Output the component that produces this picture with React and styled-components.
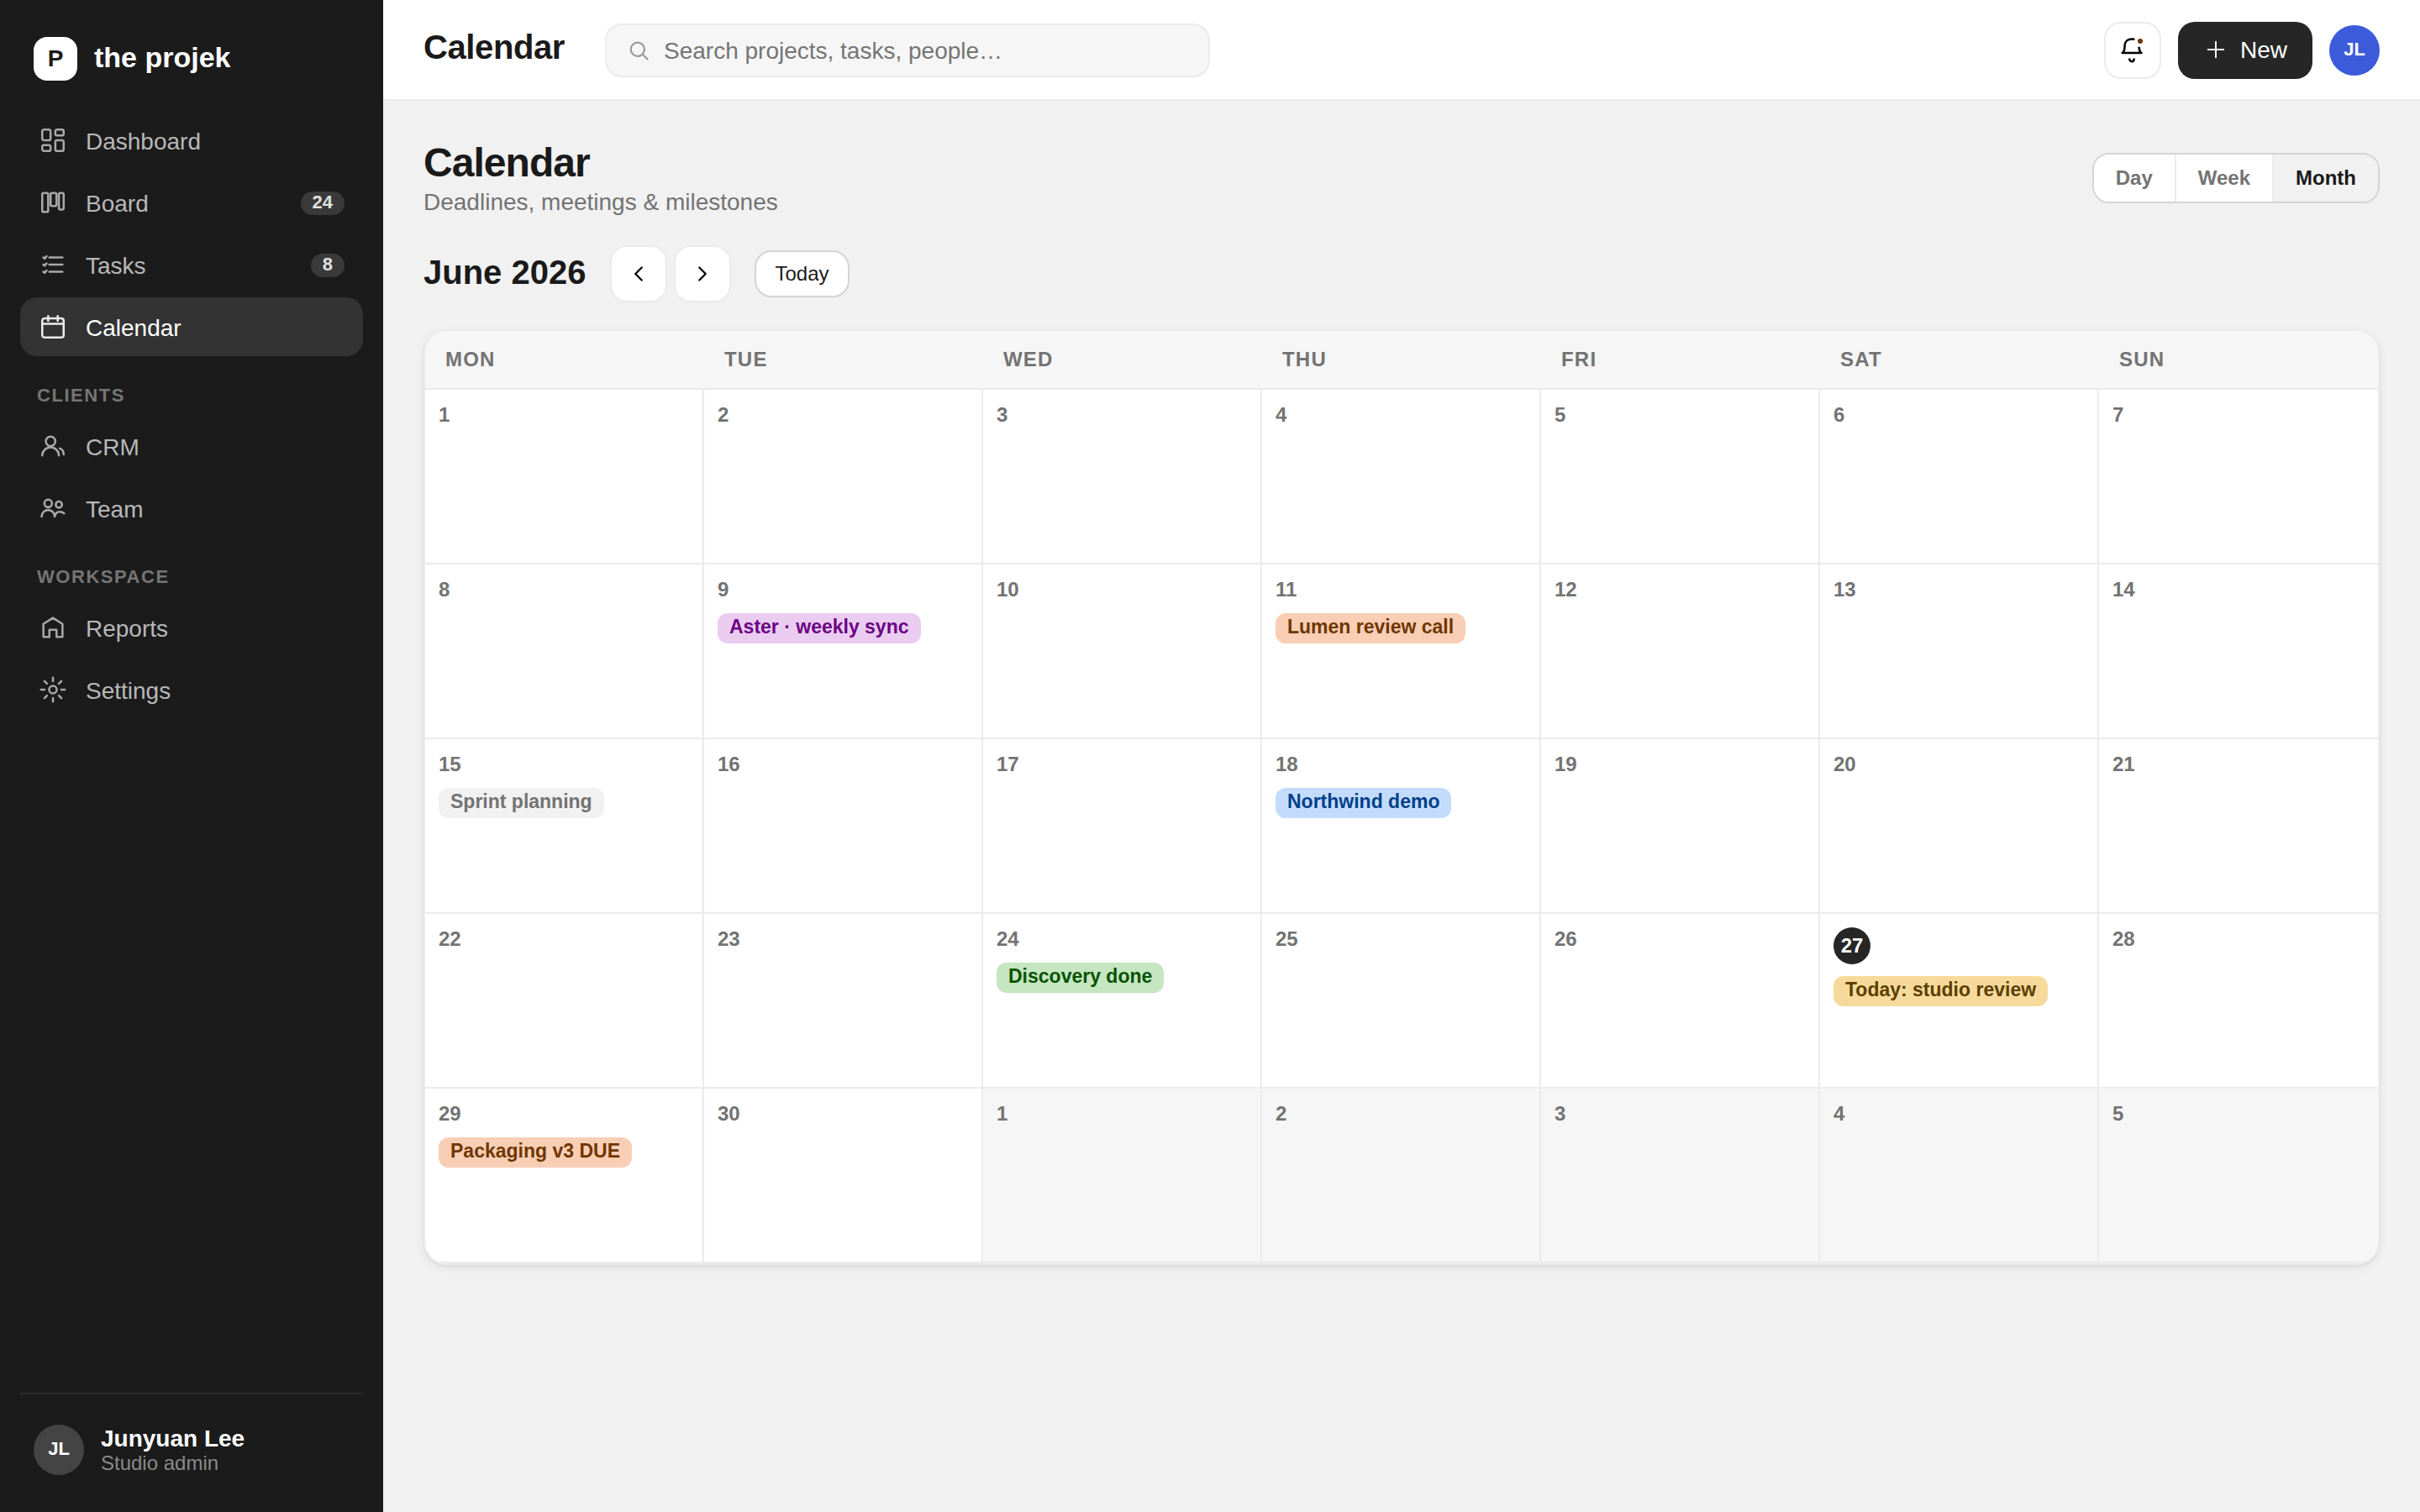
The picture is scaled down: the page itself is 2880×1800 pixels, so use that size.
import React from 'react';
import styled, { createGlobalStyle } from 'styled-components';

const GlobalStyle = createGlobalStyle`
  * {
    box-sizing: border-box;
  }

  html, body, #root {
    height: 100%;
    margin: 0;
  }

  body {
    font-family: "Liberation Sans", Arial, sans-serif;
    font-size: 28px;
    color: #1a1a1a;
    background: #f1f1f1;
  }

  button, input {
    font-family: inherit;
  }
`

const Layout = styled.div`
display: flex;
height: 100vh;
`

/* ---------- sidebar ---------- */

const Sidebar = styled.aside`
width: 456px;
flex-shrink: 0;
padding: 44px 24px;
display: flex;
flex-direction: column;
background: #1b1b1b;
`

const Brand = styled.div`
display: flex;
align-items: center;
gap: 20px;
padding: 0 16px;
margin-bottom: 36px;
`

const BrandMark = styled.div`
width: 52px;
height: 52px;
border-radius: 16px;
display: flex;
align-items: center;
justify-content: center;
background: #fff;
color: #1b1b1b;
font-size: 28px;
font-weight: 700;
`

const BrandName = styled.span`
padding-bottom: 3px;
font-size: 34px;
font-weight: 700;
color: #fff;
`

const Nav = styled.nav`
display: flex;
flex-direction: column;
gap: 4px;
`

const NavItem = styled.a`
height: 70px;
padding: 0 22px;
border-radius: 20px;
display: flex;
align-items: center;
gap: 22px;
color: ${props => props.$active ? '#fff' : '#b8b8b8'};
background: ${props => props.$active ? '#333' : 'transparent'};

svg {
  opacity: 0.9;
}
`

const NavText = styled.span`
flex: 1;
padding-top: 3px;
line-height: 32px;
`

const NavCount = styled.span`
height: 28px;
margin-top: 2px;
padding: 0 14px;
border-radius: 14px;
background: #3a3a3a;
color: #e0e0e0;
font-size: 22px;
font-weight: 700;
line-height: 26px;
`

const NavLabel = styled.div`
height: 64px;
padding: 30px 20px 0;
font-size: 22px;
font-weight: 700;
line-height: 26px;
letter-spacing: 0.07em;
text-transform: uppercase;
color: #757575;
`

const UserBox = styled.div`
margin-top: auto;
padding: 36px 16px 0;
border-top: 2px solid #2e2e2e;
display: flex;
align-items: center;
gap: 20px;
`

const Avatar = styled.div`
width: 60px;
height: 60px;
padding-bottom: 3px;
border-radius: 50%;
display: flex;
align-items: center;
justify-content: center;
background: ${props => props.$color};
color: #fff;
font-size: 22px;
font-weight: 700;
`

const UserName = styled.div`
padding-top: 2px;
font-weight: 700;
line-height: 30px;
color: #fff;
`

const UserRole = styled.div`
font-size: 24px;
line-height: 28px;
color: #8a8a8a;
`

/* ---------- top bar ---------- */

const Main = styled.main`
flex: 1;
min-width: 0;
`

const Topbar = styled.header`
height: 120px;
padding: 0 48px;
display: flex;
align-items: center;
background: #fff;
box-shadow: inset 0 -2px #ebebeb;
`

const TopTitle = styled.div`
margin-right: 48px;
padding-bottom: 7px;
font-size: 40px;
font-weight: 700;
letter-spacing: -0.01em;
`

const SearchBox = styled.div`
width: 720px;
height: 64px;
padding: 0 24px;
border: 2px solid #ebebeb;
border-radius: 20px;
display: flex;
align-items: center;
gap: 16px;
background: #f6f6f6;
color: #999;

svg {
  margin-bottom: 1px;
}
`

const SearchInput = styled.input`
flex: 1;
padding: 2px 0 0;
border: 0;
outline: 0;
background: transparent;
font-size: 28px;

&::placeholder {
  color: #757575;
}
`

const TopActions = styled.div`
margin-left: auto;
display: flex;
align-items: center;
gap: 20px;
`

const IconButton = styled.button`
position: relative;
width: 68px;
height: 68px;
padding: 0;
border: 2px solid #ebebeb;
border-radius: 20px;
display: flex;
align-items: center;
justify-content: center;
background: #fff;
color: #000;
`

const AlertDot = styled.span`
position: absolute;
top: 14px;
right: 16px;
width: 14px;
height: 14px;
border: 4px solid #fff;
border-radius: 50%;
background: #6f3600;
`

const NewButton = styled.button`
height: 68px;
padding: 0 30px 0 32px;
border: 0;
border-radius: 20px;
display: flex;
align-items: center;
gap: 16px;
background: #262626;
color: #fff;
font-size: 28px;

svg {
  margin-bottom: 2px;
}
`

/* ---------- calendar page ---------- */

const Page = styled.section`
padding: 48px;
`

const PageHead = styled.div`
display: flex;
align-items: center;
justify-content: space-between;
`

const PageTitle = styled.h1`
margin: 0 0 4px;
font-size: 48px;
line-height: 52px;
letter-spacing: -0.02em;
`

const PageSub = styled.p`
margin: 0;
padding-top: 1px;
line-height: 31px;
color: #737373;
`

const Segments = styled.div`
height: 60px;
border: 2px solid #d4d4d4;
border-radius: 20px;
display: flex;
overflow: hidden;
`

const Segment = styled.button`
padding: 0 26px;
border: 0;
border-right: 2px solid #ebebeb;
background: ${props => props.$active ? '#f1f1f1' : '#fff'};
color: ${props => props.$active ? '#1a1a1a' : '#737373'};
font-size: 24px;
font-weight: 700;

&:last-child {
  border-right: 0;
}
`

const MonthBar = styled.div`
margin: 36px 0 32px;
display: flex;
align-items: center;
gap: 28px;
`

const MonthName = styled.h2`
margin: 0;
padding: 0 1px 4px 0;
font-size: 40px;
`

const MonthNav = styled.div`
display: flex;
gap: 8px;
`

const TodayButton = styled.button`
height: 56px;
padding: 0 22px;
border: 2px solid #d4d4d4;
border-radius: 20px;
background: #fff;
color: #1a1a1a;
font-size: 24px;
`

const Card = styled.div`
border: 2px solid #ebebeb;
border-radius: 28px;
overflow: hidden;
background: #fff;
box-shadow: 0 2px 4px rgba(0, 0, 0, 0.06), 0 4px 12px rgba(0, 0, 0, 0.06);
`

const WeekHead = styled.div`
height: 70px;
display: grid;
grid-template-columns: repeat(7, 1fr);
align-items: center;
background: #f6f6f6;
border-bottom: 2px solid #ebebeb;
`

const WeekDay = styled.span`
padding-left: 24px;
font-size: 24px;
font-weight: 700;
letter-spacing: 0.05em;
text-transform: uppercase;
color: #737373;
`

const Days = styled.div`
display: grid;
grid-template-columns: repeat(7, 1fr);
grid-auto-rows: 208px;
`

const Day = styled.div`
padding: 16px;
display: flex;
flex-direction: column;
align-items: flex-start;
gap: 14px;
border-right: 2px solid #ebebeb;
border-bottom: 2px solid #ebebeb;
background: ${props => props.$outside ? '#f6f6f6' : '#fff'};

&:nth-child(7n) {
  border-right: 0;
}
`

const DayNumber = styled.span`
font-size: 24px;
font-weight: 700;
line-height: 28px;
color: #737373;
`

const TodayNumber = styled(DayNumber)`
width: 44px;
height: 44px;
border-radius: 50%;
line-height: 44px;
text-align: center;
background: #262626;
color: #fff;
`

const tones = {
  purple: ['#eaccf1', '#6b0085'],
  orange: ['#f8ceb4', '#6f3600'],
  gray: ['#f1f1f1', '#737373'],
  blue: ['#c4dcfb', '#00408a'],
  green: ['#c5e6c0', '#085200'],
  amber: ['#f7da9b', '#5a3f00'],
}

const EventPill = styled.span`
height: 36px;
padding: 3px 14px 0;
border-radius: 12px;
background: ${props => tones[props.$tone][0]};
color: ${props => tones[props.$tone][1]};
font-size: 23px;
font-weight: 700;
line-height: 26px;
white-space: nowrap;
`

/* ---------- icons ---------- */

const Icon = ({ size = 34, stroke = 1.8, children }) => (
    <svg width={size} height={size} viewBox="0 0 24 24" fill="none" stroke="currentColor"
        strokeWidth={stroke} strokeLinecap="round" strokeLinejoin="round">
        {children}
    </svg>
)

const icons = {
  dashboard: (
    <Icon>
      <rect x="3" y="3" width="7" height="9" rx="1.5" />
      <rect x="14" y="3" width="7" height="5" rx="1.5" />
      <rect x="14" y="12" width="7" height="9" rx="1.5" />
      <rect x="3" y="16" width="7" height="5" rx="1.5" />
    </Icon>
  ),
  board: (
    <Icon>
      <rect x="3" y="4" width="5" height="16" rx="1.2" />
      <rect x="10" y="4" width="5" height="11" rx="1.2" />
      <rect x="17" y="4" width="4" height="14" rx="1.2" />
    </Icon>
  ),
  tasks: (
    <Icon>
      <path d="M9 6h11M9 12h11M9 18h11" />
      <path d="M4 6l1 1 1.6-2M4 12l1 1 1.6-2M4 18l1 1 1.6-2" />
    </Icon>
  ),
  calendar: (
    <Icon>
      <rect x="3" y="5" width="18" height="16" rx="2" />
      <path d="M3 9.5h18M8 3v4M16 3v4" />
    </Icon>
  ),
  crm: (
    <Icon>
      <circle cx="10" cy="8" r="4" />
      <path d="M3 20a7 7 0 0 1 14 0M17.8 14c2 .7 3.2 2.4 3.2 5" />
    </Icon>
  ),
  team: (
    <Icon>
      <circle cx="8" cy="8" r="3.2" />
      <circle cx="17" cy="9" r="2.6" />
      <path d="M2.5 19a5.5 5.5 0 0 1 11 0M13.5 19c.4-2.5 1.9-4 4.1-4 1.6 0 2.9.5 3.8 1.4" />
    </Icon>
  ),
  reports: (
    <Icon>
      <path d="M4 9l8-5 8 5v11h-5v-6H9v6H4z" />
    </Icon>
  ),
  settings: (
    <Icon>
      <circle cx="12" cy="12" r="3.2" />
      <path d="M12 2v3M12 19v3M2 12h3M19 12h3M4.9 4.9L7 7M17 17l2.1 2.1M4.9 19.1L7 17M17 7l2.1-2.1" />
    </Icon>
  ),
}

/* ---------- data ---------- */

const menu = [
  {
    items: [
      { icon: 'dashboard', text: 'Dashboard' },
      { icon: 'board', text: 'Board', count: 24 },
      { icon: 'tasks', text: 'Tasks', count: 8 },
      { icon: 'calendar', text: 'Calendar', active: true },
    ],
  },
  {
    label: 'Clients',
    items: [
      { icon: 'crm', text: 'CRM' },
      { icon: 'team', text: 'Team' },
    ],
  },
  {
    label: 'Workspace',
    items: [
      { icon: 'reports', text: 'Reports' },
      { icon: 'settings', text: 'Settings' },
    ],
  },
]

const weekDays = ['Mon', 'Tue', 'Wed', 'Thu', 'Fri', 'Sat', 'Sun']

const events = {
  9: { title: 'Aster · weekly sync', tone: 'purple' },
  11: { title: 'Lumen review call', tone: 'orange' },
  15: { title: 'Sprint planning', tone: 'gray' },
  18: { title: 'Northwind demo', tone: 'blue' },
  24: { title: 'Discovery done', tone: 'green' },
  27: { title: 'Today: studio review', tone: 'amber' },
  29: { title: 'Packaging v3 DUE', tone: 'orange' },
}

const TODAY = 27
const DAYS_IN_MONTH = 30

// five full weeks, the tail runs into July
const cells = Array.from({ length: 35 }, (_, i) => {
  const outside = i >= DAYS_IN_MONTH
  return {
    key: i,
    number: outside ? i - DAYS_IN_MONTH + 1 : i + 1,
    outside,
    event: outside ? null : events[i + 1],
    today: i + 1 === TODAY,
  }
})

const SideMenu = () => (
  <Sidebar>
    <Brand>
      <BrandMark>P</BrandMark>
      <BrandName>the projek</BrandName>
    </Brand>
    <Nav>
      {menu.map((group, i) => (
        <React.Fragment key={i}>
          {group.label && <NavLabel>{group.label}</NavLabel>}
          {group.items.map(item => (
            <NavItem key={item.text} $active={item.active}>
              {icons[item.icon]}
              <NavText>{item.text}</NavText>
              {item.count && <NavCount>{item.count}</NavCount>}
            </NavItem>
          ))}
        </React.Fragment>
      ))}
    </Nav>
    <UserBox>
      <Avatar $color="#444">JL</Avatar>
      <div>
        <UserName>Junyuan Lee</UserName>
        <UserRole>Studio admin</UserRole>
      </div>
    </UserBox>
  </Sidebar>
)

const Header = () => (
  <Topbar>
    <TopTitle>Calendar</TopTitle>
    <SearchBox>
      <Icon size={28}>
        <circle cx="11" cy="11" r="7" />
        <path d="M21 21l-4.5-4.5" />
      </Icon>
      <SearchInput placeholder="Search projects, tasks, people…" />
    </SearchBox>
    <TopActions>
      <IconButton>
        <svg width="34" height="34" viewBox="0 0 34 34" fill="none" stroke="currentColor"
          strokeWidth="2.5" strokeLinecap="round" strokeLinejoin="round">
          <path d="M4.6 20.1h22.9M5.4 19.6c1.6-1.8 2.2-4.1 2.2-7.9 0-5.3 3.4-8.2 8.5-8.2s8.5 2.9 8.5 8.2c0 3.8.6 6.1 2 7.9" />
          <path d="M13.3 27.5a2.65 2.65 0 0 0 5.3 0" />
        </svg>
        <AlertDot />
      </IconButton>
      <NewButton>
        <Icon size={26}>
          <path d="M12 3.5v17M3.5 12h17" />
        </Icon>
        New
      </NewButton>
      <Avatar $color="#3b5bdb">JL</Avatar>
    </TopActions>
  </Topbar>
)

export default function App() {
  return (
    <Layout>
      <GlobalStyle />
      <SideMenu />
      <Main>
        <Header />
        <Page>
          <PageHead>
            <div>
              <PageTitle>Calendar</PageTitle>
              <PageSub>Deadlines, meetings &amp; milestones</PageSub>
            </div>
            <Segments>
              <Segment>Day</Segment>
              <Segment>Week</Segment>
              <Segment $active>Month</Segment>
            </Segments>
          </PageHead>

          <MonthBar>
            <MonthName>June 2026</MonthName>
            <MonthNav>
              <IconButton>
                <Icon size={30}><path d="M15 6l-6 6 6 6" /></Icon>
              </IconButton>
              <IconButton>
                <Icon size={30}><path d="M9 6l6 6-6 6" /></Icon>
              </IconButton>
            </MonthNav>
            <TodayButton>Today</TodayButton>
          </MonthBar>

          <Card>
            <WeekHead>
              {weekDays.map(day => <WeekDay key={day}>{day}</WeekDay>)}
            </WeekHead>
            <Days>
              {cells.map(cell => (
                <Day key={cell.key} $outside={cell.outside}>
                  {cell.today
                    ? <TodayNumber>{cell.number}</TodayNumber>
                    : <DayNumber>{cell.number}</DayNumber>}
                  {cell.event && <EventPill $tone={cell.event.tone}>{cell.event.title}</EventPill>}
                </Day>
              ))}
            </Days>
          </Card>
        </Page>
      </Main>
    </Layout>
  )
}
